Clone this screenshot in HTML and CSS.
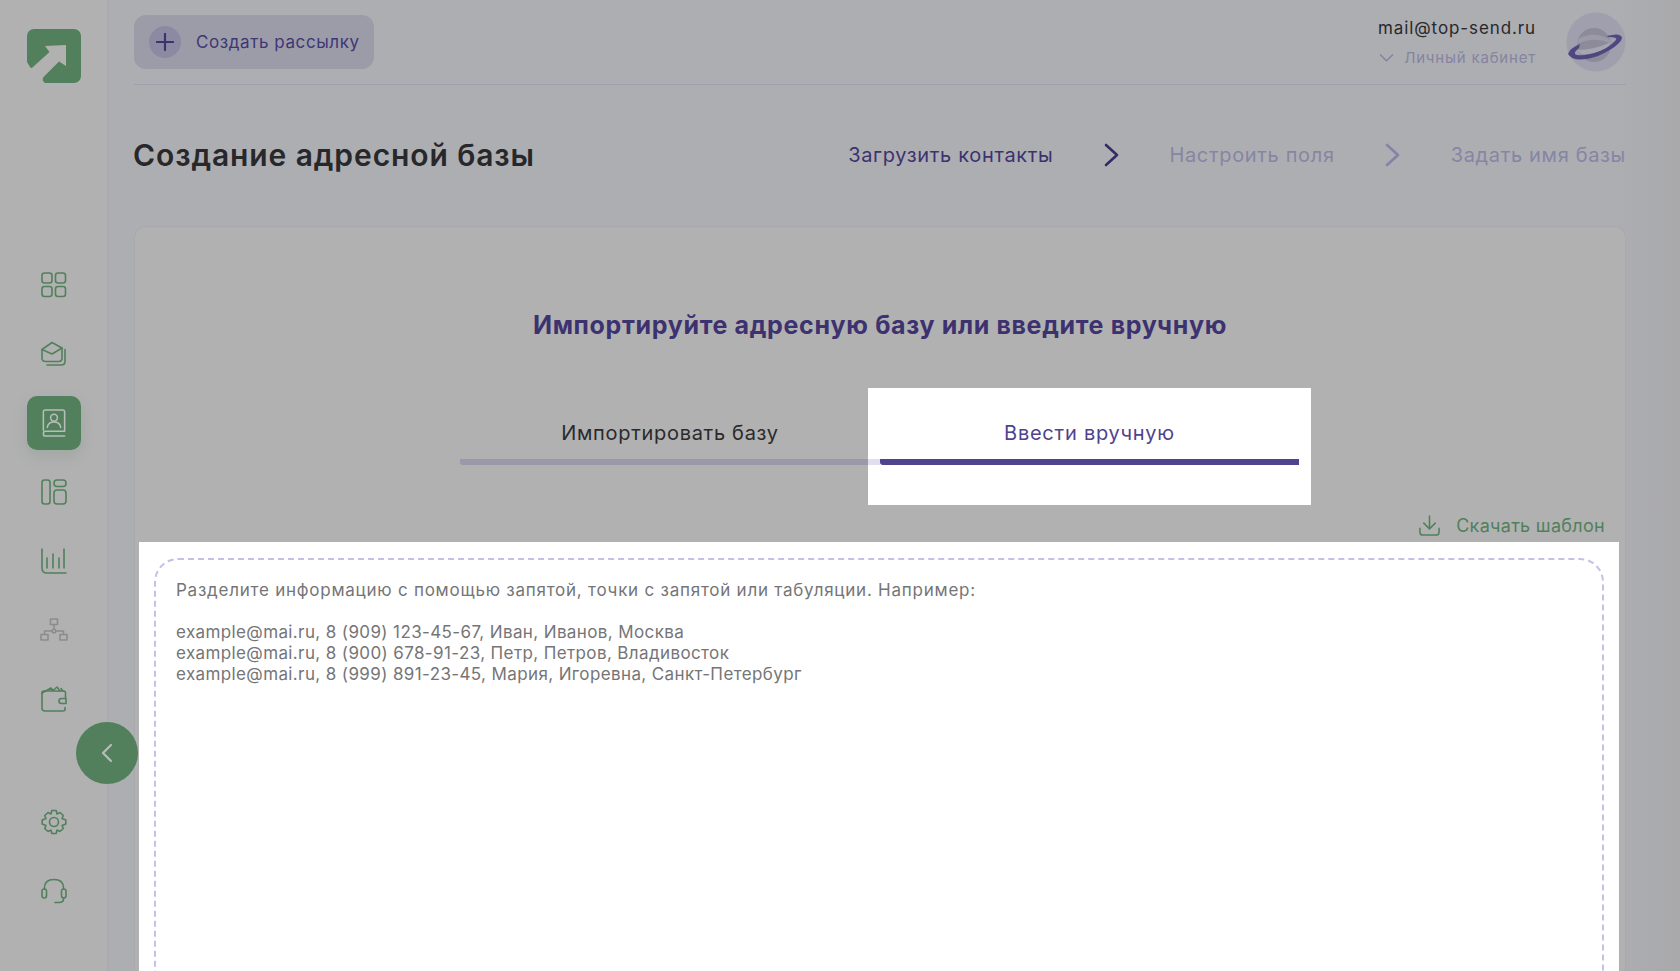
FILE: index.html
```html
<!DOCTYPE html>
<html lang="ru">
<head>
<meta charset="utf-8">
<title>Создание адресной базы</title>
<link rel="stylesheet" href="styles.css">
</head>
<body>
<div class="app">
  <aside class="sidebar">
    <svg class="logo" viewBox="0 0 54 54"><rect width="54" height="54" rx="7" fill="#52805c"/><path d="M18 17L39 16V37L32 32.500L16.500 48Q15 50 16 52L18 54H0V33L3 38Q4 40 6 38L22.500 23Z" fill="#b1b1b1"/></svg>
    <nav class="nav">
      <a class="nav-item"><svg viewBox="0 0 26 26"><rect x="1" y="1" width="10" height="10" rx="2.500"/><rect x="14.500" y="1" width="10" height="10" rx="2.500"/><rect x="1" y="14.500" width="10" height="10" rx="2.500"/><rect x="14.500" y="14.500" width="10" height="10" rx="2.500"/></svg></a>
      <a class="nav-item"><svg viewBox="0 0 26 26"><path d="M1 8.500L11 1.500L21 7V17Q21 20.500 17.500 20.500H4.500Q1 20.500 1 17Z"/><path d="M1 8.500L11 13L21 7"/><path d="M24 8.500V20.500Q24 24 20 24H6"/></svg></a>
      <a class="nav-item is-active"><svg viewBox="0 0 26 30"><path d="M2 22V3Q2 1 4 1H22Q24 1 24 3V23H4Q2 23 2 25.500Q2 28 4 28H24"/><circle cx="13" cy="9" r="3.500"/><path d="M6 19Q7 13.500 13 13.500Q19 13.500 20 19"/></svg></a>
      <a class="nav-item"><svg viewBox="0 0 26 26"><rect x="1" y="1" width="8" height="24" rx="2.500"/><rect x="13" y="1" width="12" height="6.500" rx="3"/><rect x="13" y="11" width="12" height="14" rx="3"/></svg></a>
      <a class="nav-item"><svg viewBox="0 0 26 26"><path d="M1 1V20Q1 25 6 25H25"/><path d="M6 10V20M12 6V20M18 10V20M23 1V20"/></svg></a>
      <a class="nav-item is-muted"><svg viewBox="0 0 28 24"><rect x="10.500" y="1" width="7" height="5.500"/><rect x="1" y="16.500" width="7" height="5.500"/><rect x="20" y="16.500" width="7" height="5.500"/><circle cx="14" cy="13" r="1.800"/><path d="M14 6.500V11M4.500 16.500V13H12M23.500 16.500V13H16"/></svg></a>
      <a class="nav-item"><svg viewBox="0 0 26 26"><path d="M24 21.500V24Q24 25 22 25H4Q1 25 1 22V7Q1 5 3 5H23Q24.500 5 24.500 7V12"/><path d="M1 7L10 2L12 4.500L16 1L19 5M20 2.500L22 5"/><path d="M25 12.500H20.500Q18 12.500 18 15Q18 17.500 20.500 17.500H25Z"/></svg></a>
    </nav>
    <nav class="nav nav-bottom">
      <a class="nav-item"><svg viewBox="0 0 26 26"><circle cx="13" cy="13" r="4.500"/><path d="M10.800 1.500H15.200L16 5L19 3.500L22.300 6.500L21 9.500L24.800 11V15L21 16.500L22.300 19.500L19 22.500L16 21L15.200 24.500H10.800L10 21L7 22.500L3.700 19.500L5 16.500L1.200 15V11L5 9.500L3.700 6.500L7 3.500L10 5Z"/></svg></a>
      <a class="nav-item"><svg viewBox="0 0 26 26"><path d="M3.500 11V10Q3.500 1.500 13 1.500Q22.500 1.500 22.500 10V11"/><rect x="1" y="11" width="4.500" height="9" rx="2.200"/><rect x="20.500" y="11" width="4.500" height="9" rx="2.200"/><path d="M22.500 20V21Q22.500 24.500 18 24.500H14"/></svg></a>
    </nav>
  </aside>
  <button class="collapse" type="button" aria-label="Свернуть"><svg viewBox="0 0 12 20"><path d="M10 2L2 10L10 18"/></svg></button>
  <main class="main">
    <header class="topbar">
      <a class="create-btn"><span class="create-plus"><svg viewBox="0 0 20 20"><path d="M10 1V19M1 10H19"/></svg></span><span>Создать рассылку</span></a>
      <div class="account">
        <div class="account-text">
          <div class="account-mail">mail@top-send.ru</div>
          <div class="account-link"><svg viewBox="0 0 16 10"><path d="M1.500 1.500L8 8L14.500 1.500"/></svg><span>Личный кабинет</span></div>
        </div>
        <svg class="avatar" viewBox="0 0 60 60"><circle cx="30" cy="30" r="29.500" fill="#a09fae"/><circle cx="28" cy="33" r="17" fill="#8d8b9a"/><path d="M12 27Q28 18 44 28V31Q28 24 11 32Z" fill="#9c9aa8"/><path d="M11 38Q28 38 45 30L42 38Q28 44 15 42Z" fill="#a7a5b1"/><path d="M2 42Q4 36 14 32L13 36Q8 40 9 42Q12 45 28 41Q42 37 50 28Q52 25 42 25L41 24Q55 20 56 26Q54 34 32 44Q8 52 2 42Z" fill="#4f4880"/></svg>
      </div>
    </header>
    <section class="page-head">
      <h1 class="page-title">Создание адресной базы</h1>
      <ol class="steps">
        <li class="step is-current">Загрузить контакты</li>
        <li class="step-arrow is-current"><svg viewBox="0 0 15 24"><path d="M2 2L13 12L2 22"/></svg></li>
        <li class="step">Настроить поля</li>
        <li class="step-arrow"><svg viewBox="0 0 15 24"><path d="M2 2L13 12L2 22"/></svg></li>
        <li class="step">Задать имя базы</li>
      </ol>
    </section>
    <section class="card">
      <h2 class="card-title">Импортируйте адресную базу или введите вручную</h2>
      <div class="tabs">
        <div class="tab"><span class="tab-label">Импортировать базу</span></div>
        <div class="tab-spot"><div class="tab tab-active"><span class="tab-label">Ввести вручную</span></div></div>
      </div>
      <div class="download-row">
        <a class="download"><svg viewBox="0 0 22 22"><path d="M11 1V14M5 8.500L11 14.500L17 8.500"/><path d="M1 14V18Q1 21 4 21H18Q21 21 21 18V14"/></svg><span>Скачать шаблон</span></a>
      </div>
      <div class="editor-spot">
        <div class="editor">
          <p class="hint-lead">Разделите информацию с помощью запятой, точки с запятой или табуляции. Например:</p>
          <p class="hint">example@mai.ru, 8 (909) 123-45-67, Иван, Иванов, Москва<br>example@mai.ru, 8 (900) 678-91-23, Петр, Петров, Владивосток<br>example@mai.ru, 8 (999) 891-23-45, Мария, Игоревна, Санкт-Петербург</p>
        </div>
      </div>
    </section>
  </main>
</div>
</body>
</html>
```

FILE: styles.css
```css
* { box-sizing: border-box; }
html, body { margin: 0; height: 971px; overflow: hidden; }
body { font-family: Inter, "Noto Sans", "Liberation Sans", sans-serif; background: #adaeb2; color: #2a2a2c; }
svg { display: block; fill: none; stroke-linecap: round; stroke-linejoin: round; }
h1, h2, p, ol { margin: 0; padding: 0; }
ol { list-style: none; }

.app { position: relative; display: flex; height: 971px; overflow: hidden; background: linear-gradient(90deg, #adaeb2 0, #adaeb2 96%, #a9a9ab 100%); }

.sidebar { flex: 0 0 108px; display: flex; flex-direction: column; align-items: flex-start; padding: 29px 0 0 27px; background: #b1b1b1; border-right: 1px solid #a9a8af; }
.logo { width: 54px; height: 54px; }
.nav { display: flex; flex-direction: column; gap: 15px; margin-top: 175px; }
.nav-bottom { margin-top: 69px; }
.nav-item { display: flex; align-items: center; justify-content: center; width: 54px; height: 54px; border-radius: 10px; }
.nav-item svg { width: 26px; height: 26px; stroke: #52805c; stroke-width: 1.600; }
.nav-item.is-muted svg { width: 28px; stroke: #8c8c8c; }
.nav-item.is-active { background: #52805c; box-shadow: 0 6px 14px rgba(82, 128, 92, .18); }
.nav-item.is-active svg { height: 29px; stroke: #b8bdb9; }

.collapse { position: absolute; left: 76px; top: 722px; z-index: 2; display: flex; align-items: center; justify-content: center; width: 62px; height: 62px; padding: 0; border: 0; border-radius: 50%; background: #52805c; }
.collapse svg { width: 12px; height: 20px; stroke: #b8bdb9; stroke-width: 2.200; }

.main { flex: 1; min-width: 0; padding: 0 54px 0 26px; }
.topbar { display: flex; align-items: center; justify-content: space-between; height: 85px; padding-bottom: 1px; border-bottom: 1px solid #9f9fb0; }
.create-btn { display: flex; align-items: center; gap: 15px; width: 240px; height: 54px; padding-left: 15px; border-radius: 12px; background: #9c9ca9; color: #3f3675; font-size: 17px; letter-spacing: .58px; }
.create-plus { display: flex; align-items: center; justify-content: center; width: 32px; height: 32px; border-radius: 50%; background: #8a8aa3; }
.create-plus svg { width: 18px; height: 18px; stroke: #3d3270; stroke-width: 2.400; }
.account { display: flex; align-items: center; gap: 30px; }
.account-text { display: flex; flex-direction: column; align-items: flex-end; gap: 10px; margin-top: 2px; }
.account-mail { font-size: 17px; line-height: 20px; letter-spacing: .9px; color: #28282a; }
.account-link { display: flex; align-items: center; gap: 10px; font-size: 15px; line-height: 20px; letter-spacing: .8px; color: #8584a0; }
.account-link svg { width: 15px; height: 10px; stroke: #8582a3; stroke-width: 1.600; }
.avatar { width: 60px; height: 60px; }

.page-head { display: flex; align-items: center; justify-content: space-between; height: 141px; padding-bottom: 2px; }
.page-title { margin-left: -1px; font-size: 30px; line-height: 40px; font-weight: 600; color: #28282a; letter-spacing: .9px; }
.steps { display: flex; align-items: center; font-size: 20px; letter-spacing: .66px; color: #8685a4; }
.step.is-current { color: #3d3270; }
.step-arrow { display: flex; justify-content: center; width: 116px; }
.step-arrow svg { width: 15px; height: 24px; stroke: #8582a8; stroke-width: 2.600; }
.step-arrow.is-current svg { stroke: #332a68; }

.card { height: 760px; padding-top: 83px; background: #b1b1b1; border: 1px solid #a9a9ad; border-radius: 12px 12px 0 0; border-bottom: 0; }
.card-title { font-size: 25px; line-height: 30px; font-weight: 700; text-align: center; color: #3d3270; letter-spacing: .65px; }
.tabs { display: flex; margin: 48px 0 0 325px; }
.tab { width: 408px; height: 77px; display: flex; flex-direction: column; align-items: center; padding-top: 32px; border-bottom: 6px solid #9a99aa; color: #2a2a2c; font-size: 20px; }
.tab:first-child { border-radius: 3px 0 0 3px; }
.tab-label { display: block; margin-right: -12px; line-height: 26px; letter-spacing: .7px; }
.tab-spot { position: relative; width: 443px; height: 117px; padding: 0 12px; background: #fff; }
.tab-spot::before { content: ""; position: absolute; left: 0; top: 71px; width: 12px; height: 6px; background: #e0dff0; }
.tab-active { width: 419px; border-bottom-color: #4f438e; color: #4f438e; border-radius: 3px; }
.tab-active .tab-label { margin-right: 0; letter-spacing: .75px; }

.download-row { display: flex; justify-content: flex-end; height: 37px; padding: 8px 20px 0 0; }
.download { display: flex; align-items: center; gap: 16px; height: 24px; color: #52805c; font-size: 18px; letter-spacing: .3px; }
.download svg { width: 21px; height: 21px; stroke: #52805c; stroke-width: 1.600; }

.editor-spot { height: 430px; margin: 0 6px 0 4px; padding: 16px 15px 0 15px; background: #fff; }
.editor { height: 520px; padding: 20px 20px 0 20px; border: 2px dashed #c3c1e6; border-radius: 24px; color: #757577; font-size: 17px; line-height: 21px; }
.hint-lead { letter-spacing: .76px; }
.hint { margin-top: 21px; letter-spacing: .38px; }
```
